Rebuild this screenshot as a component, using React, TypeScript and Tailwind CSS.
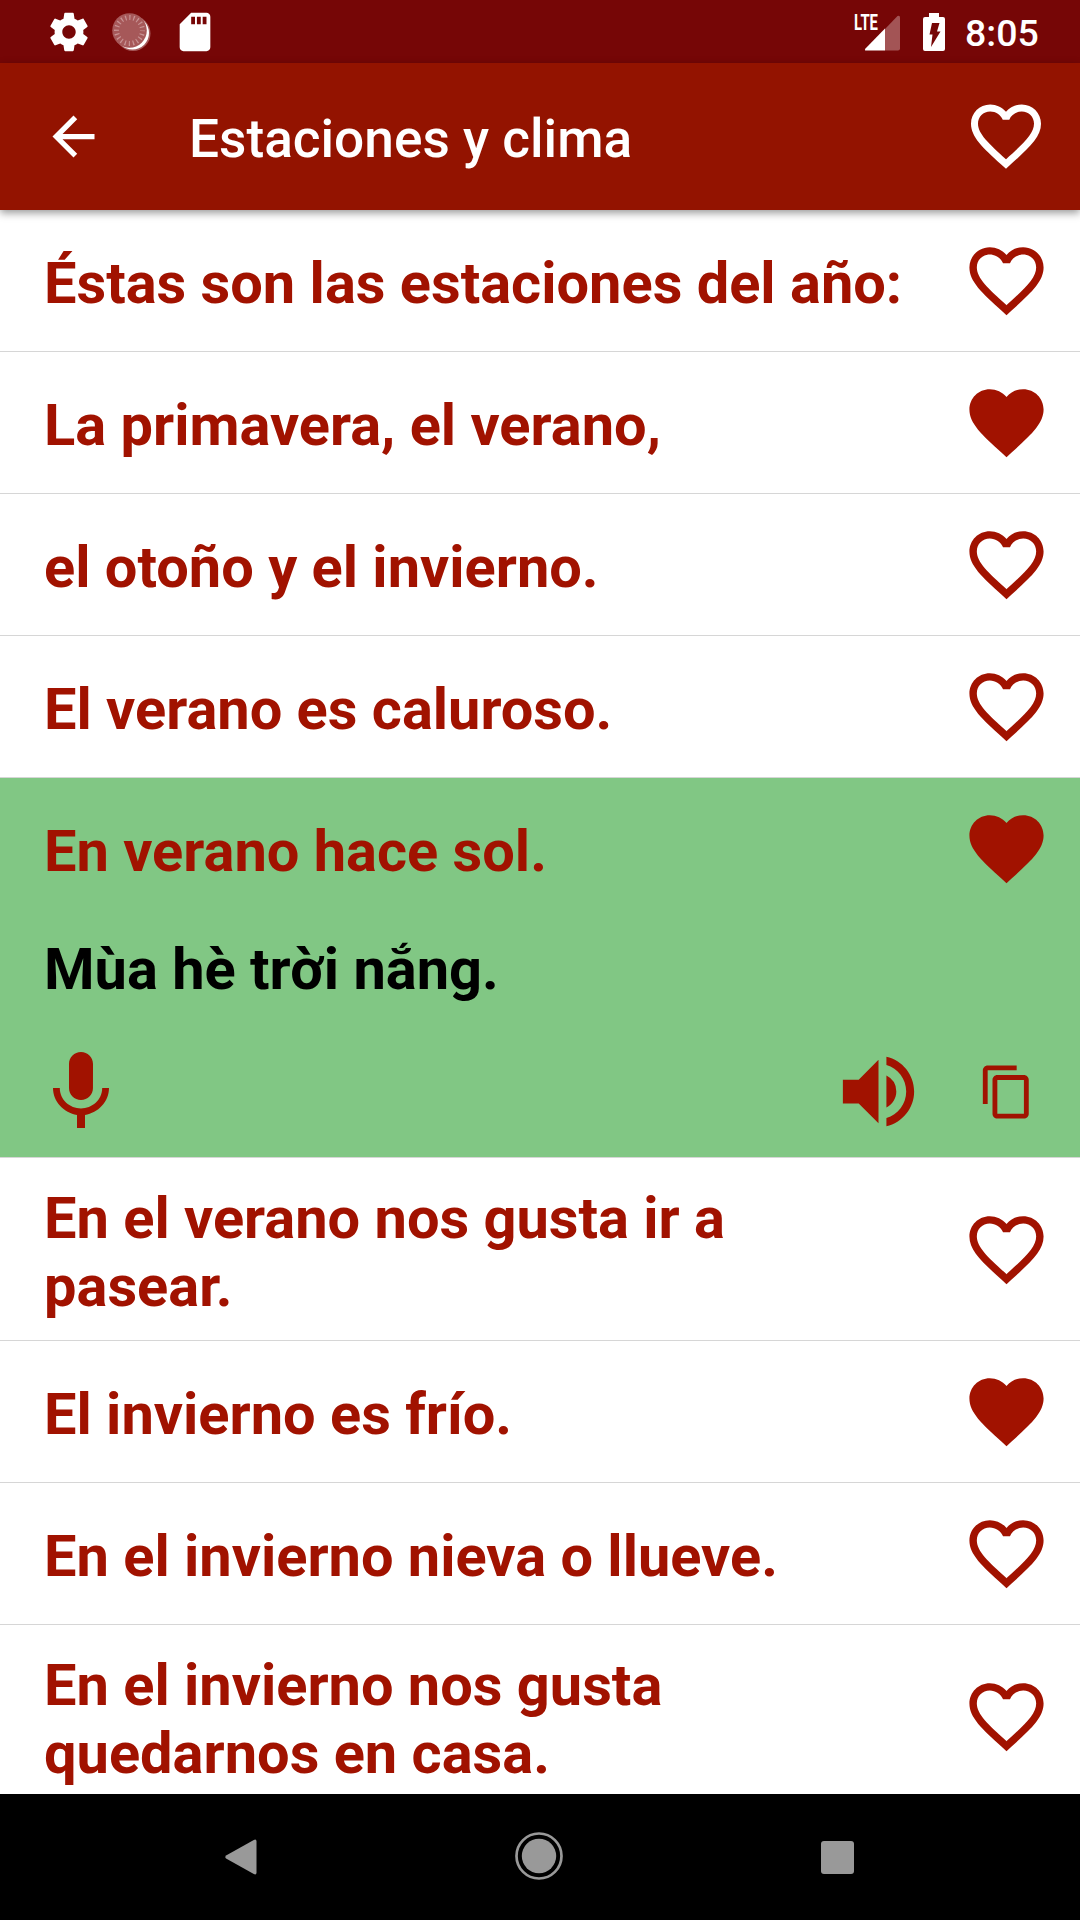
import { MdArrowBack, MdContentCopy, MdMic, MdVolumeUp, MdSdCard } from "react-icons/md";

const HEART =
  "M12 21.35l-1.45-1.32C5.4 15.36 2 12.28 2 8.5 2 5.42 4.42 3 7.5 3c1.74 0 3.41.81 4.5 2.09C13.09 3.81 14.76 3 16.5 3 19.58 3 22 5.42 22 8.5c0 3.78-3.4 6.86-8.55 11.54L12 21.35z";
const HEART_OUTLINE =
  "M16.5 3c-1.74 0-3.41.81-4.5 2.09C10.91 3.81 9.24 3 7.5 3 4.42 3 2 5.42 2 8.5c0 3.78 3.4 6.86 8.55 11.54L12 21.35l1.45-1.32C18.6 15.36 22 12.28 22 8.5 22 5.42 19.58 3 16.5 3zm-4.4 15.55l-.1.1-.1-.1C7.14 14.24 4 11.39 4 8.5 4 6.5 5.5 5 7.5 5c1.54 0 3.04.99 3.57 2.36h1.87C13.46 5.99 14.96 5 16.5 5c2 0 3.5 1.5 3.5 3.5 0 2.89-3.14 5.74-7.9 10.05z";
const GEAR =
  "M19.43 12.98c.04-.32.07-.64.07-.98s-.03-.66-.07-.98l2.11-1.65c.19-.15.24-.42.12-.64l-2-3.46c-.12-.22-.39-.3-.61-.22l-2.49 1c-.52-.4-1.08-.73-1.69-.98l-.38-2.65C14.46 2.18 14.25 2 14 2h-4c-.25 0-.46.18-.49.42l-.38 2.65c-.61.25-1.17.59-1.69.98l-2.49-1c-.23-.09-.49 0-.61.22l-2 3.46c-.13.22-.07.49.12.64l2.11 1.65c-.04.32-.07.65-.07.98s.03.66.07.98l-2.11 1.65c-.19.15-.24.42-.12.64l2 3.46c.12.22.39.3.61.22l2.49-1c.52.4 1.08.73 1.69.98l.38 2.65c.03.24.24.42.49.42h4c.25 0 .46-.18.49-.42l.38-2.65c.61-.25 1.17-.59 1.69-.98l2.49 1c.23.09.49 0 .61-.22l2-3.46c.12-.22.07-.49-.12-.64l-2.11-1.65zM12 15.5c-1.93 0-3.5-1.57-3.5-3.5s1.57-3.5 3.5-3.5 3.5 1.57 3.5 3.5-1.57 3.5-3.5 3.5z";

const phrases = [
  { text: "Éstas son las estaciones del año:", liked: false },
  { text: "La primavera, el verano,", liked: true },
  { text: "el otoño y el invierno.", liked: false },
  { text: "El verano es caluroso.", liked: false },
  { text: "En verano hace sol.", liked: true, translation: "Mùa hè trời nắng." },
  { text: "En el verano nos gusta ir a pasear.", liked: false },
  { text: "El invierno es frío.", liked: true },
  { text: "En el invierno nieva o llueve.", liked: false },
  { text: "En el invierno nos gusta quedarnos en casa.", liked: false },
];

function Heart({ filled, className }: { filled?: boolean; className: string }) {
  return (
    <svg viewBox="0 0 24 24" fill="currentColor" className={className}>
      <path d={filled ? HEART : HEART_OUTLINE} />
    </svg>
  );
}

function StatusBar() {
  return (
    <div className="flex h-[63px] shrink-0 items-center bg-[#760606] pl-[45.5px] pr-[42px] text-white">
      <svg viewBox="0 0 24 24" fill="currentColor" className="size-[46px]">
        <path d={GEAR} />
      </svg>
      <svg viewBox="0 0 40 40" className="ml-[20.5px] size-10">
        <circle cx="21" cy="21.5" r="17.5" fill="#a65859" />
        <circle cx="20.5" cy="21" r="16.5" fill="#fff" />
        <circle cx="17.5" cy="18.5" r="17.3" fill="#a65859" />
        <circle cx="17.5" cy="18.5" r="13" fill="none" stroke="#c89394" strokeWidth="5" strokeDasharray="1.2 2.884" strokeDashoffset="0.6" />
      </svg>
      <MdSdCard className="ml-[19.5px] size-[46px]" />

      <div className="ml-auto flex items-center">
        <svg viewBox="0 0 50 40" className="h-10 w-[50px] overflow-visible">
          <path d="M44.5 4Q47 3 47 5.5V36.5a2 2 0 0 1-2 2H32V17z" fill="#a35455" />
          <path d="M32 16.5v22H13q-2 0-.5-2z" fill="#fff" />
          <text x="1" y="18" fontSize="22.5" fontWeight="700" fill="#fff" textLength="24" lengthAdjust="spacingAndGlyphs">LTE</text>
        </svg>
        <svg viewBox="0 0 22 38" className="ml-5 h-[38px] w-[22px]">
          <path fillRule="evenodd" fill="#fff" d="M6 0h10v4h4a2 2 0 0 1 2 2v30a2 2 0 0 1-2 2H2a2 2 0 0 1-2-2V6a2 2 0 0 1 2-2h4zM9 10h7.500l-2.500 8.500H17.500L8 34l1.500-12.500H6.500z" />
        </svg>
        <span className="ml-5 w-[73px] whitespace-nowrap pt-1 text-right text-[37.5px] font-medium leading-none">8:05</span>
      </div>
    </div>
  );
}

function AppBar() {
  return (
    <header className="relative z-10 flex h-[147px] shrink-0 items-center bg-[#931300] pl-[42px] pr-8 text-white shadow-[0_3px_8px_rgba(0,0,0,0.4)]">
      <MdArrowBack className="size-[63px]" />
      <h1 className="ml-[84px] flex-1 pt-[7px] text-[53.2px] font-medium leading-none">Estaciones y clima</h1>
      <Heart className="mb-0.5 size-[84px]" />
    </header>
  );
}

function PhraseRow({ text, liked, translation }: { text: string; liked: boolean; translation?: string }) {
  return (
    <li className={translation ? "border-b border-[#d6d6d6] bg-[#81c784]" : "border-b border-[#d6d6d6]"}>
      <div className="flex min-h-[141px] items-center py-[20.5px] pl-[44px] pr-[29px]">
        <p className="flex-1 pr-12 pt-[5px] text-[57.75px] font-bold leading-[68px]">{text}</p>
        <Heart filled={liked} className="size-[89px] shrink-0" />
      </div>
      {translation && (
        <>
          <p className="pl-[44px] text-[57.75px] font-bold leading-[100px] text-black">{translation}</p>
          <div className="flex h-[138px] items-center pl-[33px] pr-11 pt-[7px]">
            <MdMic className="size-24" />
            <MdVolumeUp className="ml-auto size-[95px]" />
            <MdContentCopy className="ml-[52px] size-[58px]" />
          </div>
        </>
      )}
    </li>
  );
}

function NavBar() {
  return (
    <nav className="flex h-[126px] shrink-0 items-center bg-black pl-[216px] text-[#999]">
      <svg viewBox="0 0 48 48" className="size-12" fill="currentColor">
        <path d="M10.500 22.200 37.800 6.900Q40.500 5.600 40.500 8.500V39.500Q40.500 42.400 37.800 41.100L10.500 25.800Q8 24 10.500 22.200z" />
      </svg>
      <svg viewBox="0 0 48 48" className="mb-0.5 ml-[251px] size-12">
        <circle cx="24" cy="24" r="22.5" fill="none" stroke="currentColor" strokeWidth="2.700" />
        <circle cx="24" cy="24" r="17.2" fill="currentColor" />
      </svg>
      <span className="ml-[258px] size-[33px] rounded-[3px] bg-[#999]" />
    </nav>
  );
}

export default function App() {
  return (
    <div className="flex h-[1920px] w-[1080px] flex-col overflow-hidden bg-white font-['Roboto',sans-serif]">
      <StatusBar />
      <AppBar />
      <ul className="min-h-0 flex-1 overflow-hidden text-[#a11200]">
        {phrases.map((phrase) => (
          <PhraseRow key={phrase.text} {...phrase} />
        ))}
      </ul>
      <NavBar />
    </div>
  );
}
